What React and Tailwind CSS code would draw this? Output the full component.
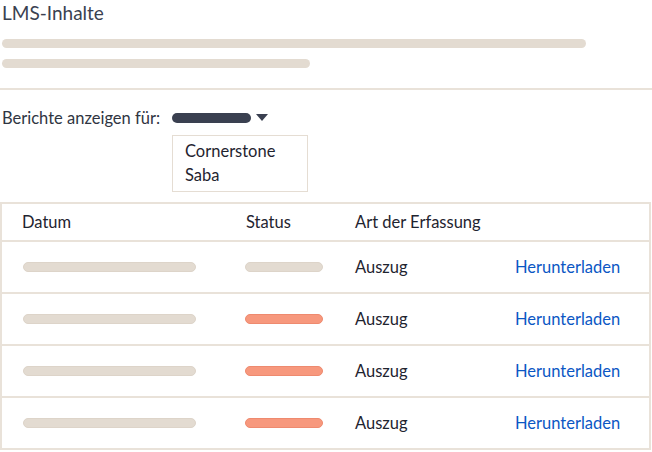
const rows = [
  { status: "bg-[#e3dbd1] border-[#ddd4c9]" },
  { status: "bg-[#f7987d] border-[#ee8a6f]" },
  { status: "bg-[#f7987d] border-[#ee8a6f]" },
  { status: "bg-[#f7987d] border-[#ee8a6f]" },
];

const cols = "grid grid-cols-[224px_109px_160px_1fr] pl-[20px] items-center";

export default function App() {
  return (
    <div className="w-[652px] h-[452px] bg-white overflow-hidden text-[#1f2430]" style={{ fontFamily: "Lato, 'Noto Sans', sans-serif" }}>
      <div className="pl-[2px] pt-[1px] text-[19px] leading-[23px] text-[#3a4150]">LMS-Inhalte</div>
      <div className="ml-[2px] mt-[15px] h-[9px] w-[584px] rounded-full bg-[#e3dbd1]" />
      <div className="ml-[2px] mt-[11px] h-[9px] w-[308px] rounded-full bg-[#e3dbd1]" />
      <div className="mt-[20px] h-[2px] bg-[#e9e2d9]" />

      <div className="mt-[18px] flex items-center h-[20px]">
        <span className="w-[172px] pl-[2px] text-[16.5px] leading-[20px] text-[#2f3542]">Berichte anzeigen für:</span>
        <span className="h-[10px] w-[79px] rounded-full bg-[#3a4050]" />
        <svg className="ml-[5px]" width="12" height="8" viewBox="0 0 12 8">
          <path d="M0 0 H12 L6 7 Z" fill="#3a4050" />
        </svg>
      </div>

      <div className="ml-[172px] mt-[7px] w-[136px] h-[57px] border border-[#e5ddd3] pl-[12px] pt-[3px] text-[16.5px] leading-[24px] text-[#1f2430]">
        <div>Cornerstone</div>
        <div>Saba</div>
      </div>

      <div className="mt-[10px] w-[651px] border-2 border-b-0 border-[#e9e2d9]">
        <div className={`${cols} h-[38px] text-[16.5px] border-b-2 border-[#e9e2d9]`}>
          <span>Datum</span>
          <span>Status</span>
          <span>Art der Erfassung</span>
          <span />
        </div>
        {rows.map((r, i) => (
          <div key={i} className={`${cols} h-[52px] text-[16.5px] border-b-2 border-[#e9e2d9]`}>
            <span className="block ml-[1px] h-[10px] w-[173px] rounded-full bg-[#e3dbd1] border border-[#ddd4c9]" />
            <span className="block -ml-[1px]">
              <span className={`block h-[10px] w-[78px] rounded-full border ${r.status}`} />
            </span>
            <span>Auszug</span>
            <span className="text-[#0b57c4]">Herunterladen</span>
          </div>
        ))}
      </div>
    </div>
  );
}
